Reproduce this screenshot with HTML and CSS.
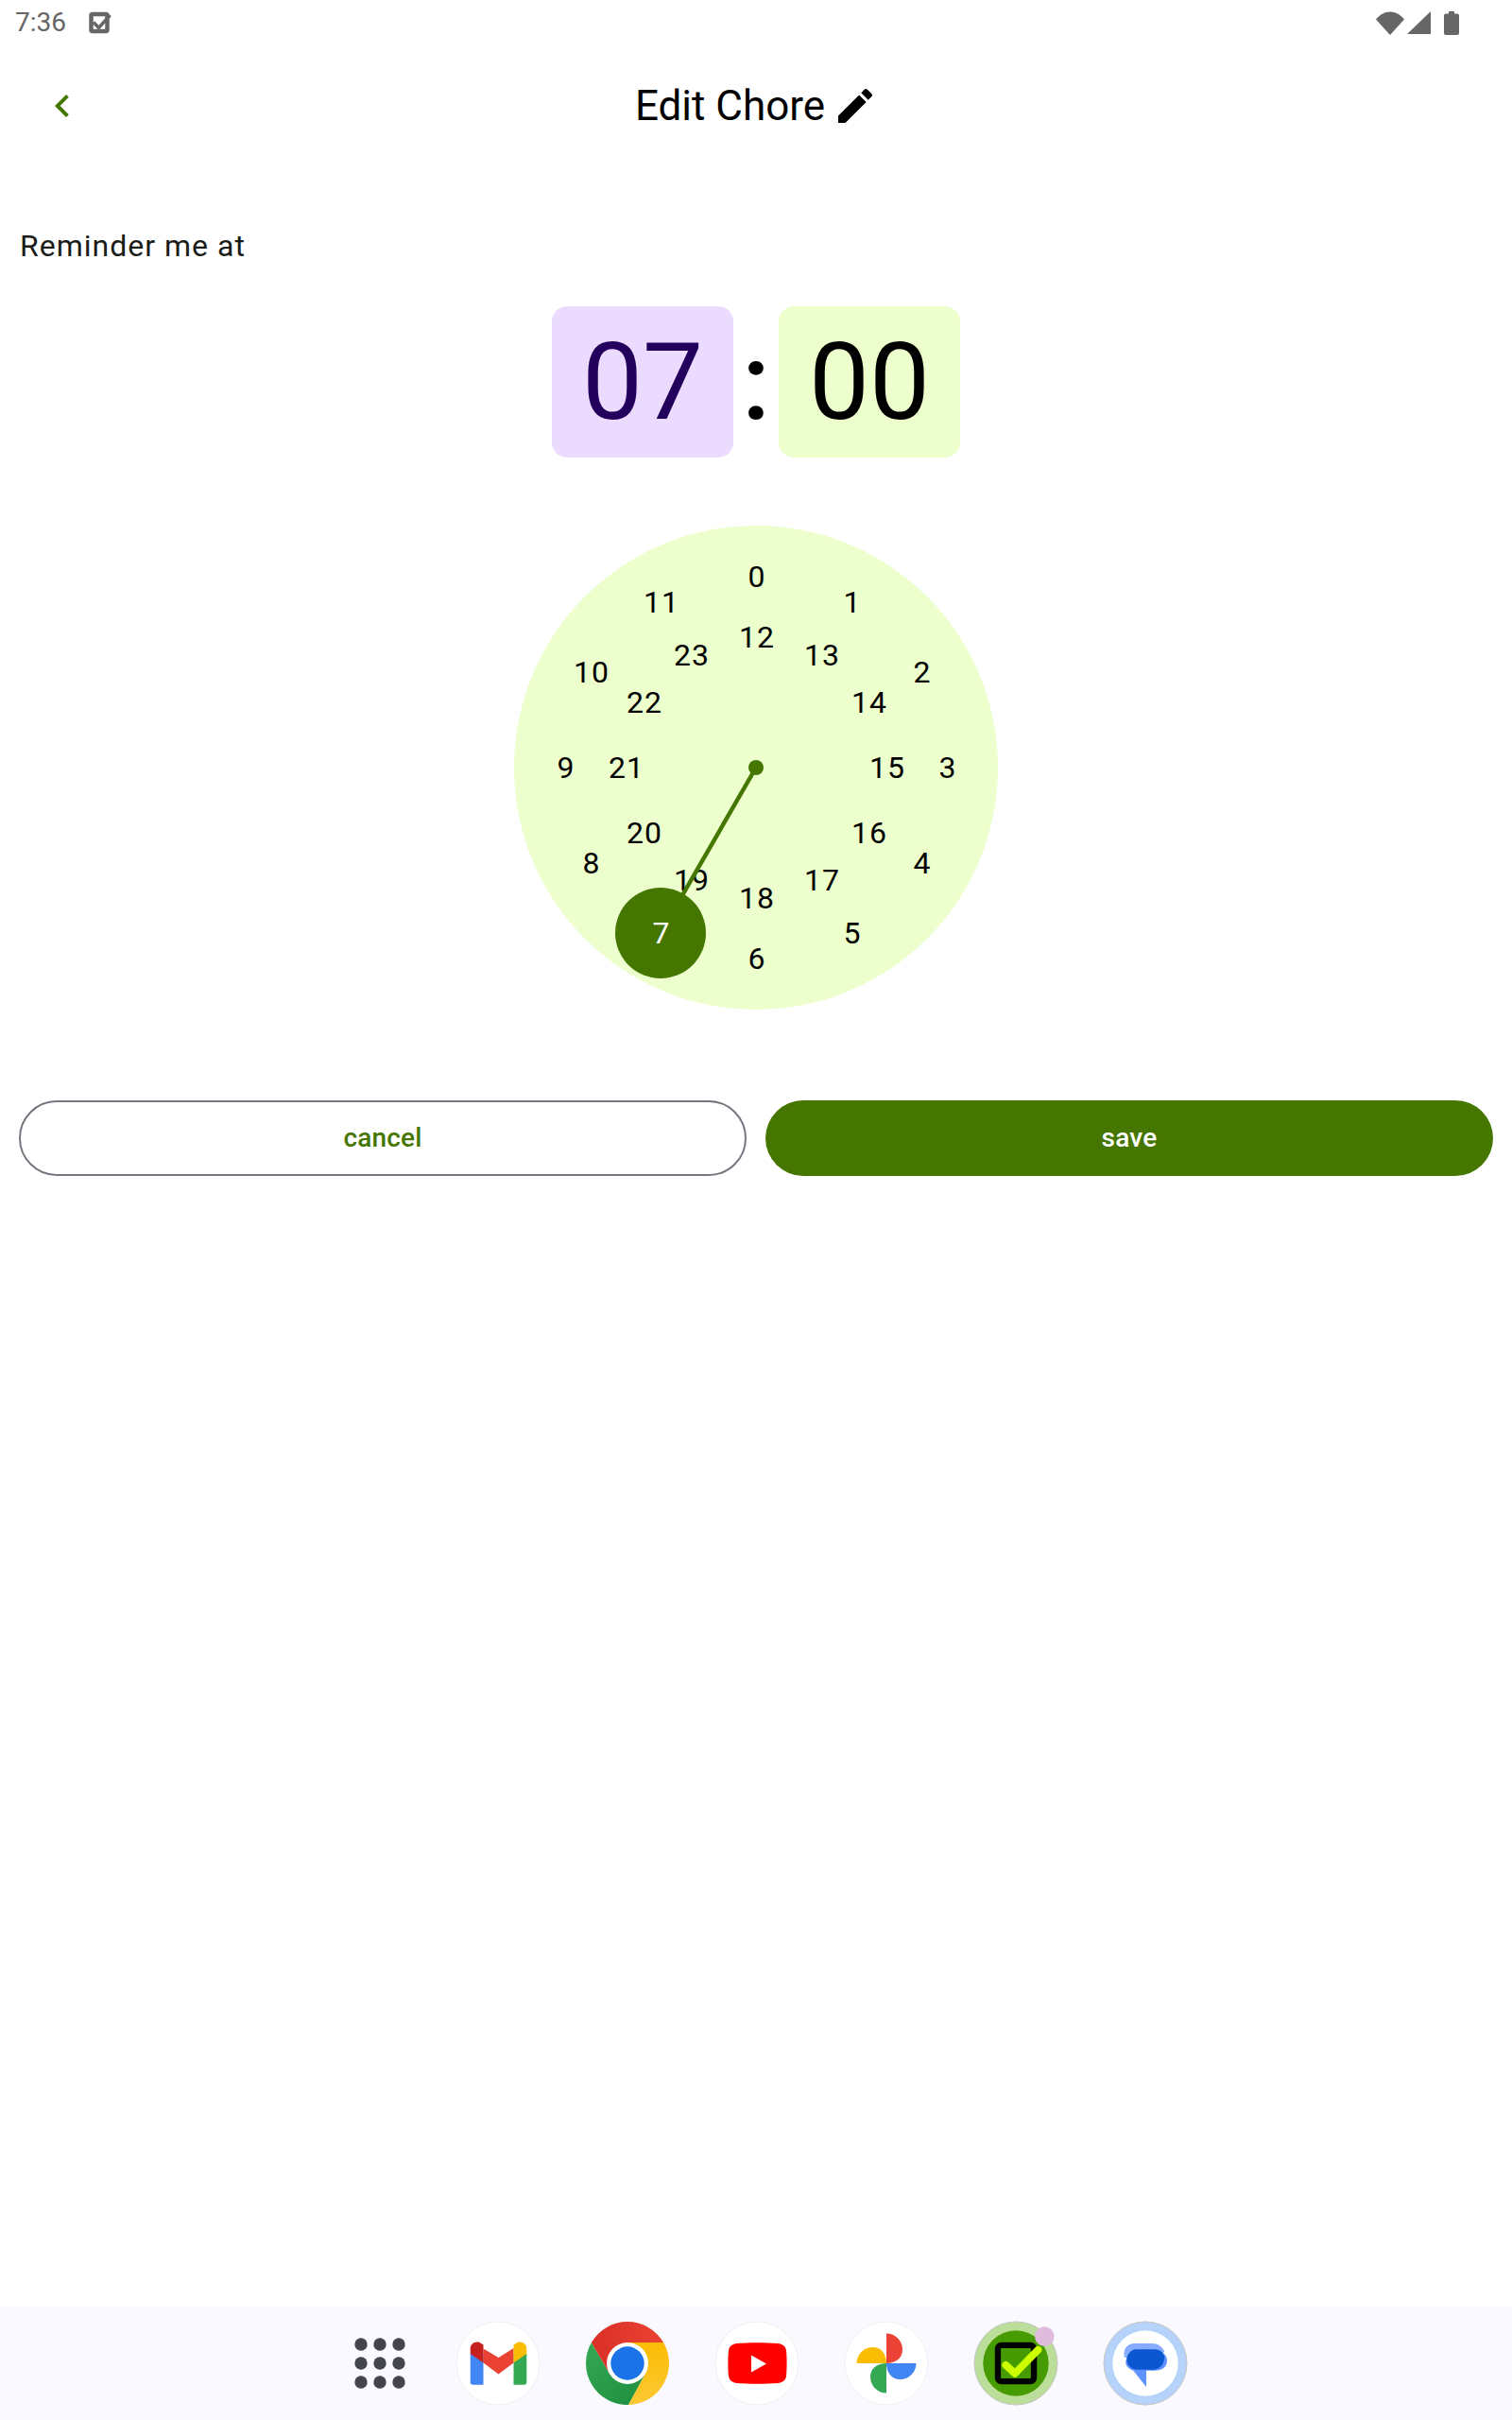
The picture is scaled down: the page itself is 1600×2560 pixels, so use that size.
FILE: index.html
```html
<!DOCTYPE html>
<html lang="en">
<head>
<meta charset="utf-8">
<title>Edit Chore</title>
<link rel="stylesheet" href="styles.css">
</head>
<body>
<div class="screen">
  <header class="status">
    <div class="status-left">
      <span class="clock-text">7:36</span>
      <svg class="notif" viewBox="0 0 25 24"><rect x="2.500" y="3" width="17" height="18" rx="1.500" fill="none" stroke="#666" stroke-width="4.500"/><path d="M5 11.500l5.500 6L22.500 4" fill="none" stroke="#666" stroke-width="3.500"/></svg>
    </div>
    <div class="status-right">
      <svg class="st-wifi" viewBox="0 0 30 25"><path fill="#666" d="M15 25 0 8.500C4 3.500 9 .5 15 .5s11 3 15 8z"/></svg>
      <svg class="st-signal" viewBox="0 0 25 24"><path fill="#666" d="M0 24 25 0v24z"/></svg>
      <svg class="st-batt" viewBox="0 0 16 25"><path fill="#666" d="M5 0h6v2.500h3a2 2 0 0 1 2 2V23a2 2 0 0 1-2 2H2a2 2 0 0 1-2-2V4.500a2 2 0 0 1 2-2h3z"/></svg>
    </div>
  </header>

  <div class="appbar">
    <svg class="back" viewBox="0 0 24 24"><path d="M15.410 7.410 14 6l-6 6 6 6 1.410-1.410L10.830 12z"/></svg>
    <h1 class="title">Edit Chore</h1>
    <svg class="edit" viewBox="0 0 24 24"><path d="M3 17.250V21h3.750L17.810 9.940l-3.750-3.750L3 17.250zM20.710 7.040c.39-.39.39-1.020 0-1.410l-2.340-2.340c-.39-.39-1.020-.39-1.410 0l-1.830 1.830 3.750 3.750 1.830-1.830z"/></svg>
  </div>

  <main class="content">
    <p class="label">Reminder me at</p>

    <div class="time">
      <div class="tile tile-hour">07</div>
      <div class="colon">:</div>
      <div class="tile tile-min">00</div>
    </div>

    <div class="dial">
      <span class="num" style="left:256px;top:54px">0</span>
      <span class="num" style="left:357px;top:81px">1</span>
      <span class="num" style="left:431px;top:155px">2</span>
      <span class="num" style="left:458px;top:256px">3</span>
      <span class="num" style="left:431px;top:357px">4</span>
      <span class="num" style="left:357px;top:431px">5</span>
      <span class="num" style="left:256px;top:458px">6</span>
      <span class="num" style="left:81px;top:357px">8</span>
      <span class="num" style="left:54px;top:256px">9</span>
      <span class="num" style="left:81px;top:155px">10</span>
      <span class="num" style="left:155px;top:81px">11</span>
      <span class="num" style="left:256px;top:118px">12</span>
      <span class="num" style="left:325px;top:137px">13</span>
      <span class="num" style="left:375px;top:187px">14</span>
      <span class="num" style="left:394px;top:256px">15</span>
      <span class="num" style="left:375px;top:325px">16</span>
      <span class="num" style="left:325px;top:375px">17</span>
      <span class="num" style="left:256px;top:394px">18</span>
      <span class="num" style="left:187px;top:375px">19</span>
      <span class="num" style="left:137px;top:325px">20</span>
      <span class="num" style="left:118px;top:256px">21</span>
      <span class="num" style="left:137px;top:187px">22</span>
      <span class="num" style="left:187px;top:137px">23</span>
      <svg class="hand" viewBox="0 0 512 512">
        <line x1="256" y1="256" x2="155" y2="431" stroke="#457600" stroke-width="4.500"/>
        <circle cx="256" cy="256" r="8" fill="#457600"/>
        <circle cx="155" cy="431" r="48" fill="#457600"/>
      </svg>
      <span class="num num-selected" style="left:155px;top:431px">7</span>
    </div>

    <div class="actions">
      <button class="btn btn-cancel">cancel</button>
      <button class="btn btn-save">save</button>
    </div>
  </main>

  <footer class="dock">
    <svg class="dock-grid" viewBox="0 0 60 60">
      <g fill="#44444f">
        <circle cx="10" cy="10" r="6.700"/><circle cx="30" cy="10" r="6.700"/><circle cx="50" cy="10" r="6.700"/>
        <circle cx="10" cy="30" r="6.700"/><circle cx="30" cy="30" r="6.700"/><circle cx="50" cy="30" r="6.700"/>
        <circle cx="10" cy="50" r="6.700"/><circle cx="30" cy="50" r="6.700"/><circle cx="50" cy="50" r="6.700"/>
      </g>
    </svg>

    <svg class="dock-icon" viewBox="-45 -45 90 90">
      <circle r="44" fill="#fff" stroke="#f0f0f4"/>
      <path fill="#4285f4" d="M-29.300-10V19.700a3 3 0 0 0 3 3h10.800V-10z"/>
      <path fill="#34a853" d="M30.300-10V19.700a3 3 0 0 1-3 3H16.500V-10z"/>
      <path fill="#ea4335" d="M-15.500-15.500.5-6l16-10V-.5L.5 11.500-15.500-.5z"/>
      <path fill="#c5221f" d="M-29.300-10v-5.500c0-6 6.800-9 11.500-5.600l2.300 1.700V-.5z"/>
      <path fill="#fbbc04" d="M30.300-10v-5.500c0-6-6.800-9-11.500-5.600l-2.300 1.700V-.5z"/>
    </svg>

    <svg class="dock-icon" viewBox="-45 -45 90 90">
      <defs>
        <linearGradient id="cr" x1="0" x2="1" y1="0" y2="0"><stop offset="0" stop-color="#d93025"/><stop offset="1" stop-color="#ea4335"/></linearGradient>
        <linearGradient id="cg" x1="0" x2="1" y1="0" y2="1"><stop offset="0" stop-color="#34a853"/><stop offset="1" stop-color="#1e8e3e"/></linearGradient>
        <linearGradient id="cy" x1="0" x2="0" y1="0" y2="1"><stop offset="0" stop-color="#fbbc04"/><stop offset="1" stop-color="#fcc934"/></linearGradient>
      </defs>
      <path fill="url(#cg)" d="M1 44A44 44 0 0 1-38.100-22L-19 11 19 11z"/>
      <path fill="url(#cy)" d="M38.100-22A44 44 0 0 1 1 44L19 11 0-22z"/>
      <path fill="url(#cr)" d="M-38.100-22A44 44 0 0 1 38.100-22H0L-19 11z"/>
      <circle r="22" fill="#fff"/>
      <circle r="17.700" fill="#1a73e8"/>
    </svg>

    <svg class="dock-icon" viewBox="-45 -45 90 90">
      <circle r="44" fill="#fff" stroke="#f0f0f4"/>
      <path fill="#f00" d="M-21-21C-10-22 11-22 22-21c5 .5 8.500 3 9 7.500.8 7 .8 20 0 27-.5 4.500-4 7-9 7.500-11 1-32 1-43 0-5-.5-8.500-3-9-7.500-.8-7-.8-20 0-27 .5-4.500 4-7 9-7.500z"/>
      <path fill="#fff" d="M-6-8.500 10 .5-6 9.500z"/>
    </svg>

    <svg class="dock-icon" viewBox="-45 -45 90 90">
      <circle r="44" fill="#fff" stroke="#f0f0f4"/>
      <path fill="#ea4335" d="M0-31.500c9.500 0 17 7.700 17 17S9.500 0 0 0z"/>
      <path fill="#4285f4" d="M31.500 0c0 9.500-7.700 17-17 17S0 9.500 0 0z"/>
      <path fill="#34a853" d="M0 31.500c-9.500 0-17-7.700-17-17S-9.500 0 0 0z"/>
      <path fill="#fbbc04" d="M-31.500 0c0-9.500 7.700-17 17-17S0-9.500 0 0z"/>
    </svg>

    <svg class="dock-icon" viewBox="-46 -46 92 92">
      <circle r="45" fill="#bbdf9b" stroke="#c4c4c4"/>
      <circle r="35.500" fill="#459b00"/>
      <rect x="-19.500" y="-19.500" width="39" height="39" rx="4" fill="none" stroke="#000" stroke-width="6.500"/>
      <path d="M-11 2-1 11 24-14.500" fill="none" stroke="#ccff00" stroke-width="8" stroke-linecap="round" stroke-linejoin="round"/>
      <circle cx="31" cy="-29" r="10.500" fill="#dfbbdd"/>
    </svg>

    <svg class="dock-icon" viewBox="-46 -46 92 92">
      <circle r="45" fill="#b5d3fb" stroke="#c4c4c4"/>
      <circle r="35.500" fill="#fff"/>
      <path fill="#87abff" d="M-12-21.500H7c7 0 11 3.500 14 9L10-6H-20l-3-1v-4c0-6 5-10.500 11-10.500z"/>
      <path fill="#5e92ff" d="M-10-14H10C18-14 23.500-9 23.500-3 23.500 4 18 8 10 8H1V25.500L-13 8C-22 4-23-1-19-8-17-12-14-14-10-14z"/>
      <path fill="#0b57d0" d="M-10-15H10C17-15 20.500-10 20.500-6 20.500 2 14 7 8 7H-9C-15 7-20 2-20-4-20-10-15-15-10-15z"/>
    </svg>
  </footer>
</div>
</body>
</html>
```
FILE: styles.css
```css
* { box-sizing: border-box; }
html, body { margin: 0; padding: 0; background: #fff; }
body { font-family: Roboto, "Liberation Sans", sans-serif; color: #000; }
.screen { width: 1600px; height: 2560px; display: flex; flex-direction: column; }

.status { height: 48px; padding: 0 56px 0 16px; display: flex; justify-content: space-between; align-items: center; }
.status-left { display: flex; align-items: center; gap: 24px; }
.clock-text { font-size: 28px; line-height: 48px; color: #666; }
.notif { width: 25px; height: 24px; }
.status-right { display: flex; align-items: center; }
.st-wifi { width: 30px; height: 25px; margin-right: 3px; }
.st-signal { width: 25px; height: 24px; margin-right: 14px; }
.st-batt { width: 16px; height: 25px; }

.appbar { height: 96px; margin-top: 16px; position: relative; display: flex; align-items: center; justify-content: center; padding-left: 1px; }
.back { position: absolute; left: 42px; top: 0; width: 48px; height: 48px; margin-top: 24px; fill: #457600; }
.title { margin: 0; font-size: 44px; font-weight: 400; line-height: 56px; }
.edit { width: 48px; height: 48px; margin-left: 8px; fill: #000; }

.content { flex: 1; display: flex; flex-direction: column; }
.label { margin: 76px 0 0 21px; font-size: 32px; line-height: 48px; letter-spacing: 1px; color: #1a1c18; }
.time { margin-top: 40px; display: flex; justify-content: center; }
.tile { width: 192px; height: 160px; border-radius: 16px; font-size: 114px; line-height: 160px; text-align: center; }
.tile-hour { background: #eadbff; color: #23005c; }
.tile-min { background: #ecffcc; color: #000; }
.colon { width: 48px; font-size: 114px; line-height: 160px; text-align: center; color: #000; font-weight: 500; }

.dial { position: relative; width: 512px; height: 512px; margin: 72px auto 0; border-radius: 50%; background: #ecffcc; }
.num { position: absolute; transform: translate(calc(-50% + 1px), -50%); font-size: 32px; line-height: 40px; letter-spacing: 1px; color: #000; }
.num-selected { color: #fff; }
.hand { position: absolute; left: 0; top: 0; width: 512px; height: 512px; }

.actions { margin-top: 96px; padding: 0 20px; display: grid; grid-template-columns: 1fr 1fr; gap: 20px; }
.btn { height: 80px; padding: 0 0 2px; border-radius: 40px; font-family: inherit; font-size: 28px; font-weight: 500; letter-spacing: .2px; }
.btn-cancel { background: #fff; border: 2px solid #74777f; color: #457600; }
.btn-save { background: #457600; border: 0; color: #fff; }

.dock { height: 120px; background: #f9f9ff; display: flex; align-items: center; justify-content: center; }
.dock-grid { width: 60px; height: 60px; margin: 0 50px 0 28px; }
.dock-icon { width: 90px; height: 90px; margin-right: 47px; flex: none; }
.dock-icon:last-child { margin-right: 0; }
```
